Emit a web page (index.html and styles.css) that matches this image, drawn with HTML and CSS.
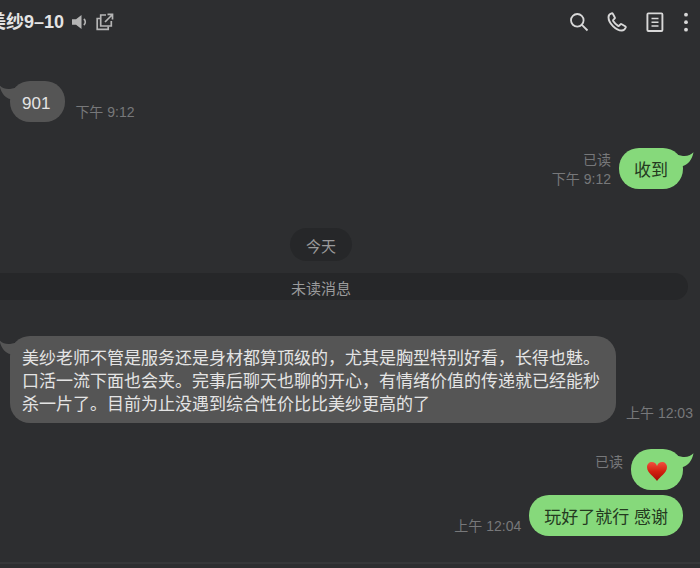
FILE: index.html
```html
<!DOCTYPE html>
<html lang="zh-CN">
<head>
    <meta charset="UTF-8">
    <meta name="viewport" content="width=device-width, initial-scale=1.0">
    <title>美纱9–10</title>
    <link rel="stylesheet" href="styles.css">
</head>
<body>
    <header class="chat-header">
        <h1>美纱9–10</h1>
        <button class="small-btn" aria-label="声音">
            <svg width="16" height="16" viewBox="0 0 16 16"><path d="M0 5.200h4L9.500 1v14L4 10.800H0z" fill="currentColor"/><path d="M11.800 5c2 1.400 2 4.600 0 6" fill="none" stroke="currentColor" stroke-width="1.600"/></svg>
        </button>
        <button class="small-btn" aria-label="新窗口">
            <svg width="18" height="18" viewBox="0 0 18 18" fill="none" stroke="currentColor" stroke-width="1.700"><path d="M10 2H4.700v11h10.600V8"/><path d="M4.500 5.500H1.200v10.800h11V13.500M9 9l7-7M11.500 1.400h5v5"/></svg>
        </button>
        <nav class="header-actions">
            <button aria-label="搜索">
                <svg width="20" height="20" viewBox="0 0 20 20" fill="none" stroke="currentColor" stroke-width="1.800"><circle cx="8.300" cy="8.300" r="6.300"/><path d="M12.900 12.900l5.600 5.600"/></svg>
            </button>
            <button aria-label="通话">
                <svg width="20" height="20" viewBox="0 0 20 20" fill="none" stroke="currentColor" stroke-width="1.900" stroke-linejoin="round"><path d="M4.600 1.400C3 1.900 1.500 3.300 1.500 5.200c0 5.900 7.400 13.300 13.300 13.300 1.900 0 3.300-1.400 3.900-3 .2-.6 0-1-.5-1.300l-3.500-2c-.5-.3-1-.2-1.300.2l-1.200 1.300c-.3.400-.7.400-1.100.2-1.900-1.200-3.700-3-4.900-4.900-.2-.4-.2-.8.100-1.100l1.200-1.200c.4-.4.5-.9.2-1.400L5.900 1.900c-.3-.5-.7-.7-1.300-.5z"/></svg>
            </button>
            <button aria-label="记事本">
                <svg width="20" height="20" viewBox="0 0 20 20" fill="none" stroke="currentColor" stroke-width="1.900"><rect x="2.400" y="1.400" width="15" height="17.600" rx="1"/><path d="M6.500 6.500h7M6.500 10.200h7M6.500 13.900h7" stroke-width="1.500"/></svg>
            </button>
            <button aria-label="更多">
                <svg width="6" height="20" viewBox="0 0 6 20" fill="currentColor"><circle cx="3" cy="2.700" r="1.900"/><circle cx="3" cy="10.200" r="1.900"/><circle cx="3" cy="17.700" r="1.900"/></svg>
            </button>
        </nav>
    </header>

    <main class="messages">
        <div class="message received">
            <p class="bubble">901<svg class="tail" width="18" height="16" viewBox="0 0 18 16"><path d="M.5.300C3 3 7 4.500 11 4l7-1.500V14h-7C6 12.500 2 8 .5.300z" fill="currentColor"/></svg></p>
            <div class="meta"><time>下午 9:12</time></div>
        </div>

        <div class="message sent">
            <div class="meta"><span>已读</span><time>下午 9:12</time></div>
            <p class="bubble">收到<svg class="tail" width="18" height="16" viewBox="0 0 18 16"><path d="M17.500.300C15 3 11 4.500 7 4L0 2.500V14h7c5-1.500 9-6 10.500-13.700z" fill="currentColor"/></svg></p>
        </div>

        <div class="day"><span>今天</span></div>
        <div class="unread">未读消息</div>

        <div class="message received">
            <p class="bubble">美纱老师不管是服务还是身材都算顶级的，尤其是胸型特别好看，长得也魅。口活一流下面也会夹。完事后聊天也聊的开心，有情绪价值的传递就已经能秒杀一片了。目前为止没遇到综合性价比比美纱更高的了<svg class="tail" width="18" height="16" viewBox="0 0 18 16"><path d="M.5.300C3 3 7 4.500 11 4l7-1.500V14h-7C6 12.500 2 8 .5.300z" fill="currentColor"/></svg></p>
            <div class="meta"><time>上午 12:03</time></div>
        </div>

        <div class="message sent">
            <div class="meta top"><span>已读</span></div>
            <p class="bubble">
                <svg class="heart" width="22" height="22" viewBox="0 0 22 22" role="img" aria-label="红心">
                    <defs>
                        <linearGradient id="heart-red" x1="0" y1="0" x2="0" y2="1">
                            <stop offset="0" stop-color="#f0503f"/>
                            <stop offset=".5" stop-color="#d3200f"/>
                            <stop offset="1" stop-color="#a30c05"/>
                        </linearGradient>
                    </defs>
                    <path d="M11 20.500C8.500 16.500 1 12.600 1 6.600 1 3.600 3.200 1.500 5.900 1.500c2.400 0 4.300 1.500 5.100 3.900.8-2.400 2.700-3.900 5.100-3.900C18.800 1.500 21 3.600 21 6.600c0 6-7.500 9.900-10 13.900z" fill="url(#heart-red)"/>
                </svg><svg class="tail" width="18" height="16" viewBox="0 0 18 16"><path d="M17.500.300C15 3 11 4.500 7 4L0 2.500V14h7c5-1.500 9-6 10.500-13.700z" fill="currentColor"/></svg></p>
        </div>
        <div class="message sent">
            <div class="meta"><time>上午 12:04</time></div>
            <p class="bubble">玩好了就行 感谢</p>
        </div>
    </main>

    <footer class="chat-footer"></footer>
</body>
</html>
```
FILE: styles.css
```css
* {
    box-sizing: border-box;
}
body {
    margin: 0;
    min-height: 100vh;
    display: flex;
    flex-direction: column;
    overflow: hidden;
    background: #2d2e30;
    color: #e4e4e4;
    font-family: "Liberation Sans", "Noto Sans CJK SC", sans-serif;
}
h1, p {
    margin: 0;
}
button {
    display: flex;
    padding: 0;
    border: 0;
    background: none;
    color: inherit;
    cursor: pointer;
}

/* Header */
.chat-header {
    display: flex;
    align-items: center;
    gap: 8px;
    height: 44px;
    padding-right: 11px;
}
.chat-header h1 {
    margin-left: -12px;
    font-size: 18px;
    line-height: 24px;
    white-space: nowrap;
}
.small-btn {
    color: #b5b5b5;
}
.header-actions {
    display: flex;
    gap: 18px;
    margin-left: auto;
    color: #d8d8d8;
}

/* Messages */
.messages {
    flex: 1;
    padding-top: 37px;
}
.message {
    display: flex;
    align-items: flex-end;
}
.received {
    gap: 10px;
    padding-left: 10px;
}
.sent {
    justify-content: flex-end;
    gap: 8px;
    margin-top: 5px;
    padding-right: 17px;
}
.received + .sent {
    margin-top: 26px;
}
.bubble {
    position: relative;
    min-width: 0;
    max-width: 606px;
    padding: 11px 15px 7px;
    border-radius: 20px;
    font-size: 17px;
    line-height: 23px;
}
.received .bubble {
    padding-left: 12px;
    background: #555555;
}
.sent .bubble {
    background: #86d97b;
    color: #24391f;
}
.tail {
    position: absolute;
    top: 4px;
}
.received .tail {
    left: -11px;
    color: #555555;
}
.sent .tail {
    right: -11px;
    color: #86d97b;
}
.heart {
    display: block;
    height: 23px;
}
.meta {
    display: flex;
    flex-direction: column;
    align-items: flex-end;
    flex-shrink: 0;
    color: #77787a;
    font-size: 14px;
    line-height: 19px;
    white-space: nowrap;
}
.meta.top {
    align-self: flex-start;
    padding-top: 4px;
}

/* Day label and unread divider */
.day, .unread {
    color: #9a9a9b;
    font-size: 15px;
    line-height: 22px;
    text-align: center;
}
.day {
    display: flex;
    justify-content: center;
    margin: 39px 0 12px;
    padding-right: 58px;
}
.day span {
    padding: 8px 16px 3px;
    border-radius: 17px;
    background: #262729;
}
.unread {
    margin: 0 12px 36px 0;
    padding: 5px 46px 0 0;
    border-radius: 0 14px 14px 0;
    background: #262729;
}

.chat-footer {
    height: 6px;
    border-top: 2px solid #363739;
}
```
